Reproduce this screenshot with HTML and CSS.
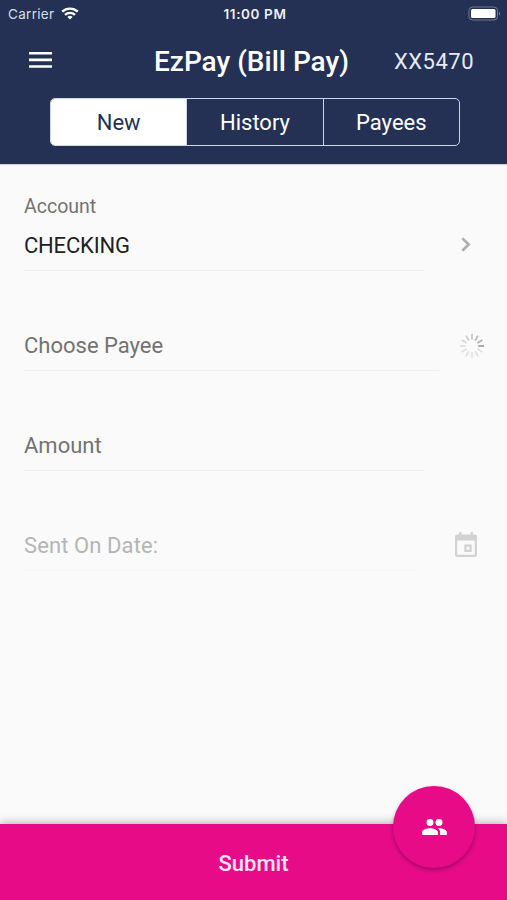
FILE: index.html
```html
<!DOCTYPE html>
<html lang="en">

<head>
  <meta charset="UTF-8">
  <meta name="viewport" content="width=device-width, initial-scale=1.0">
  <title>EzPay (Bill Pay)</title>
  <link rel="stylesheet" href="styles.css">
</head>

<body>
  <header class="header">
    <div class="status-bar">
      <div class="carrier">
        <span>Carrier</span>
        <svg class="wifi" width="18" height="13" viewBox="0 0 18 13" fill="none" stroke="#fff" stroke-width="2.3">
          <path d="M1.2 4.7a11.2 11.2 0 0 1 15.6 0" />
          <path d="M4 7.8a7.2 7.2 0 0 1 10 0" />
          <path d="M9 12.6 6.4 10a3.8 3.8 0 0 1 5.2 0z" fill="#fff" stroke="none" />
        </svg>
      </div>
      <span class="clock">11:00 PM</span>
      <svg class="battery" width="34" height="15" viewBox="0 0 34 15">
        <rect x="1" y="1" width="28.5" height="13" rx="3.5" fill="none" stroke="#6f7993" />
        <rect x="3" y="3" width="24.5" height="9" rx="1.5" fill="#fff" />
        <path d="M31 5.5q1.8 2 0 4z" fill="#8b93a9" />
      </svg>
    </div>
    <div class="toolbar">
      <button class="menu-button" type="button" aria-label="Menu">
        <svg width="23" height="16" viewBox="0 0 23 16" fill="#fff">
          <path d="M0 0h23v2.6H0zM0 6.6h23v2.6H0zM0 13.2h23v2.6H0z" />
        </svg>
      </button>
      <h1 class="title">EzPay (Bill Pay)</h1>
      <span class="account-number">XX5470</span>
    </div>
    <nav class="segment">
      <button class="segment-button active" type="button">New</button>
      <button class="segment-button" type="button">History</button>
      <button class="segment-button" type="button">Payees</button>
    </nav>
  </header>

  <main class="form">
    <div class="item item-account">
      <div class="field">
        <span class="label-stacked">Account</span>
        <span class="value">CHECKING</span>
      </div>
      <svg class="arrow" width="10" height="15" viewBox="0 0 10 15" fill="none" stroke="#b0b0b0" stroke-width="2.6">
        <path d="M1.3 1.2 7.7 7.5 1.3 13.8" />
      </svg>
    </div>
    <div class="item item-payee">
      <div class="field">
        <span class="label">Choose Payee</span>
      </div>
      <svg class="spinner" width="26" height="26" viewBox="-13 -13 26 26" stroke="#777" stroke-width="1.7">
        <path d="M6.2 0H12" opacity=".7" />
        <path d="M6.2 0H12" transform="rotate(-30)" opacity=".55" />
        <path d="M6.2 0H12" transform="rotate(-60)" opacity=".5" />
        <path d="M6.2 0H12" transform="rotate(-90)" opacity=".4" />
        <path d="M6.2 0H12" transform="rotate(-120)" opacity=".35" />
        <path d="M6.2 0H12" transform="rotate(-150)" opacity=".25" />
        <path d="M6.2 0H12" transform="rotate(180)" opacity=".2" />
        <path d="M6.2 0H12" transform="rotate(150)" opacity=".2" />
        <path d="M6.2 0H12" transform="rotate(120)" opacity=".2" />
        <path d="M6.2 0H12" transform="rotate(90)" opacity=".2" />
        <path d="M6.2 0H12" transform="rotate(60)" opacity=".2" />
        <path d="M6.2 0H12" transform="rotate(30)" opacity=".2" />
      </svg>
    </div>
    <div class="item item-amount">
      <div class="field">
        <span class="label">Amount</span>
      </div>
    </div>
    <div class="item item-date">
      <div class="field">
        <span class="label">Sent On Date:</span>
      </div>
      <svg class="calendar" width="22" height="25" viewBox="0 0 22 25" fill="#d2d2d2">
        <path fill-rule="evenodd"
          d="M4 0h2.4v2.6h9.2V0H18v2.6h2q2 0 2 2V23q0 2-2 2H2q-2 0-2-2V4.6q0-2 2-2h2zM2.2 8.6v14.2h17.6V8.6z" />
        <path fill-rule="evenodd" d="M9.3 12.5h7.4v7.4H9.3zM11.5 14.7v3h3v-3z" />
      </svg>
    </div>
  </main>

  <footer class="footer">
    <button class="submit" type="submit">Submit</button>
    <button class="fab" type="button" aria-label="Payees">
      <svg width="27" height="28" viewBox="0 0 24 24" fill="#fff">
        <circle cx="8" cy="8" r="3.1" />
        <circle cx="16" cy="8" r="3.1" />
        <path
          d="M8 13c-2.330 0-7 1.170-7 3.500V19h14v-2.500c0-2.330-4.670-3.500-7-3.500zm8 0c-.29 0-.62.02-.97.05 1.160.84 1.970 1.970 1.970 3.450V19h6v-2.500c0-2.330-4.670-3.500-7-3.500z" />
      </svg>
    </button>
  </footer>
</body>

</html>
```
FILE: styles.css
```css
* {
  box-sizing: border-box;
}

body {
  display: flex;
  flex-direction: column;
  height: 100vh;
  margin: 0;
  overflow: hidden;
  background-color: #fafafa;
  font-family: Roboto, sans-serif;
}

button {
  padding: 0;
  border: 0;
  background: none;
  color: inherit;
  font: inherit;
}

svg {
  display: block;
  flex: none;
}

.header {
  height: 164px;
  background-color: #243154;
  color: #fff;
  box-shadow: 0 1px 1px rgba(0, 0, 0, .15);
}

.status-bar {
  display: grid;
  grid-template-columns: 1fr auto 1fr;
  align-items: center;
  height: 27px;
  padding: 0 5px 0 8px;
  font-family: Inter, sans-serif;
}

.carrier {
  display: flex;
  align-items: center;
  gap: 7px;
  color: #d9dce5;
  font-size: 13.5px;
  letter-spacing: .3px;
}

.clock {
  color: #eef0f5;
  font-size: 13.5px;
  font-weight: 600;
  letter-spacing: .6px;
}

.battery {
  justify-self: end;
}

.toolbar {
  display: grid;
  grid-template-columns: 1fr auto 1fr;
  align-items: center;
  height: 71px;
  padding: 0 33px 3px 29px;
}

.menu-button {
  justify-self: start;
  padding-bottom: 3px;
}

.title {
  margin: 0;
  font-size: 28px;
  font-weight: 500;
}

.account-number {
  justify-self: end;
  color: #e6ebf4;
  font-size: 22px;
  letter-spacing: .5px;
}

.segment {
  display: flex;
  width: 410px;
  height: 48px;
  margin-left: 50px;
  border: 1.5px solid #cbd6e6;
  border-radius: 5px;
  overflow: hidden;
  font-size: 22px;
}

.segment-button {
  flex: 1;
  padding-top: 1px;
}

.segment-button + .segment-button {
  border-left: 1px solid #cbd6e6;
}

.segment-button.active {
  background-color: #fff;
  color: #243154;
}

.form {
  flex: 1;
  padding: 7px 22px 0 24px;
  color: #737373;
  font-size: 22px;
}

.item {
  display: flex;
  align-items: flex-end;
  justify-content: space-between;
  height: 100px;
}

.field {
  display: flex;
  flex-direction: column;
  justify-content: flex-end;
  width: 401px;
  height: 100px;
  padding-bottom: 10px;
  border-bottom: 1px solid #efefef;
  line-height: 28px;
}

.label-stacked {
  margin-bottom: 11px;
  font-size: 19.5px;
}

.value {
  color: #222;
  letter-spacing: -.2px;
}

.arrow {
  margin: 0 14px 19px 0;
}

.item-payee .field {
  width: 415px;
}

.spinner {
  margin: 0 0 12px;
}

.item-date .field {
  width: 393px;
  border-color: #f5f5f5;
  color: #b5b5b5;
  letter-spacing: .1px;
}

.calendar {
  margin: 0 8px 14px 0;
}

.footer {
  position: relative;
  height: 76px;
  background-color: #e70b88;
  color: #fff;
  box-shadow: 0 -1px 9px rgba(0, 0, 0, .3);
}

.submit {
  width: 100%;
  height: 100%;
  padding-top: 2px;
  color: #fde6f3;
  font-size: 22px;
  font-weight: 500;
}

.fab {
  position: absolute;
  top: -38px;
  right: 32px;
  display: grid;
  place-items: center;
  width: 82px;
  height: 82px;
  border-radius: 50%;
  background-color: #e70b88;
  box-shadow: 0 2px 4px rgba(0, 0, 0, .3);
}
```
